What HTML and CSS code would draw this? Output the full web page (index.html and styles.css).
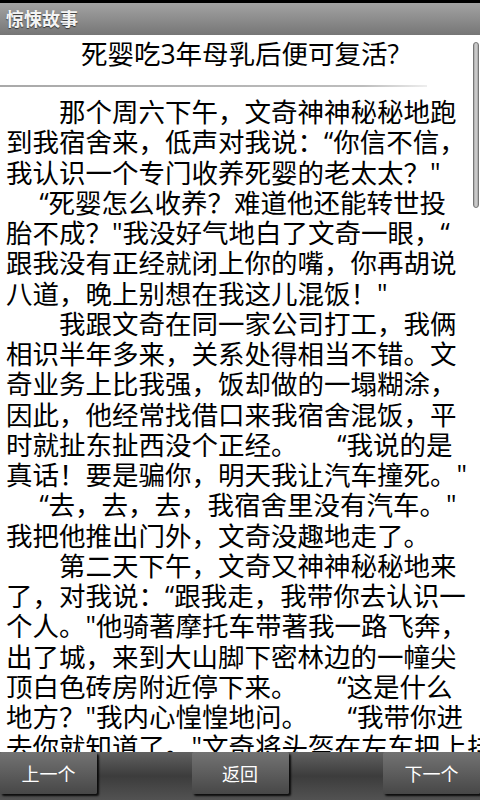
FILE: index.html
```html
<!DOCTYPE html>
<html lang="zh-CN">
<head>
<meta charset="utf-8">
<title>惊悚故事</title>
<link rel="stylesheet" href="styles.css">
</head>
<body>
<div class="screen">
  <div class="status"></div>
  <div class="titlebar"><span class="title">惊悚故事</span></div>
  <div class="content">
    <div class="scroll">
      <h1 class="heading">死婴吃3年母乳后便可复活?</h1>
      <div class="divider"></div>
      <div class="story">
        <div class="ln">　　那个周六下午，文奇神神秘秘地跑</div>
        <div class="ln">到我宿舍来，低声对我说：“你信不信，</div>
        <div class="ln">我认识一个专门收养死婴的老太太？"</div>
        <div class="ln">　 “死婴怎么收养？难道他还能转世投</div>
        <div class="ln">胎不成？"我没好气地白了文奇一眼，“</div>
        <div class="ln">跟我没有正经就闭上你的嘴，你再胡说</div>
        <div class="ln">八道，晚上别想在我这儿混饭！"</div>
        <div class="ln">　　我跟文奇在同一家公司打工，我俩</div>
        <div class="ln">相识半年多来，关系处得相当不错。文</div>
        <div class="ln">奇业务上比我强，饭却做的一塌糊涂，</div>
        <div class="ln">因此，他经常找借口来我宿舍混饭，平</div>
        <div class="ln">时就扯东扯西没个正经。　　“我说的是</div>
        <div class="ln">真话！要是骗你，明天我让汽车撞死。"</div>
        <div class="ln">　 “去，去，去，我宿舍里没有汽车。"</div>
        <div class="ln">我把他推出门外，文奇没趣地走了。</div>
        <div class="ln">　　第二天下午，文奇又神神秘秘地来</div>
        <div class="ln">了，对我说：“跟我走，我带你去认识一</div>
        <div class="ln">个人。"他骑著摩托车带著我一路飞奔，</div>
        <div class="ln">出了城，来到大山脚下密林边的一幢尖</div>
        <div class="ln">顶白色砖房附近停下来。　　“这是什么</div>
        <div class="ln">地方？"我内心惶惶地问。　　“我带你进</div>
        <div class="ln">去你就知道了。"文奇将头盔在左车把上挂</div>
      </div>
    </div>
    <div class="thumb"></div>
  </div>
  <div class="navbar">
    <button class="navbtn">上一个</button>
    <button class="navbtn">返回</button>
    <button class="navbtn">下一个</button>
  </div>
</div>
</body>
</html>
```
FILE: styles.css
```css
html, body {
  margin: 0;
  padding: 0;
}
body {
  width: 480px;
  height: 800px;
  overflow: hidden;
  background: #fff;
  font-family: "Open Sans", "Noto Sans CJK SC", sans-serif;
}
.screen {
  display: flex;
  flex-direction: column;
  height: 800px;
}
.status {
  flex: none;
  height: 3px;
  background: #000;
}
.titlebar {
  flex: none;
  height: 32px;
  display: flex;
  align-items: center;
  padding-left: 6px;
  background: linear-gradient(#a3a3a3, #767676);
}
.title {
  font-size: 18px;
  font-weight: bold;
  line-height: 1;
  color: #f4f4f4;
  text-shadow: 0 1px 1px rgba(0, 0, 0, 0.6);
}
.content {
  flex: 1;
  position: relative;
  overflow: hidden;
  background: #fff;
}
.heading {
  margin: 0;
  padding-top: 4px;
  height: 30px;
  font-size: 26.5px;
  font-weight: normal;
  line-height: 30px;
  text-align: center;
  white-space: nowrap;
  color: #000;
}
.divider {
  margin-top: 16px;
  width: 427px;
  height: 2px;
  background: linear-gradient(to right, #a9a9a9, #bdbdbd 85%, #eeeeee);
}
.story {
  padding: 10px 0 0 6px;
  font-size: 26.5px;
  color: #000;
}
.ln {
  height: 30.25px;
  line-height: 30.25px;
  white-space: pre;
}
.thumb {
  position: absolute;
  right: 1px;
  top: 7px;
  width: 6px;
  height: 166px;
  box-sizing: border-box;
  border: 1px solid #777;
  border-radius: 3px;
  background: linear-gradient(to right, #a8a8a8, #d4d4d4, #a8a8a8);
}
.navbar {
  flex: none;
  height: 48px;
  display: flex;
  justify-content: space-between;
  align-items: flex-start;
  background: linear-gradient(#616161, #3c3c3c 50%, #525252);
}
.navbtn {
  width: 97px;
  height: 42px;
  margin: 0;
  padding: 0;
  border: 0;
  border-radius: 2px;
  background: linear-gradient(#737373, #474747);
  color: #fff;
  font-family: "Open Sans", "Noto Sans CJK SC", sans-serif;
  font-size: 18px;
  box-shadow: 2px 2px 2px rgba(0, 0, 0, 0.85);
}
```
